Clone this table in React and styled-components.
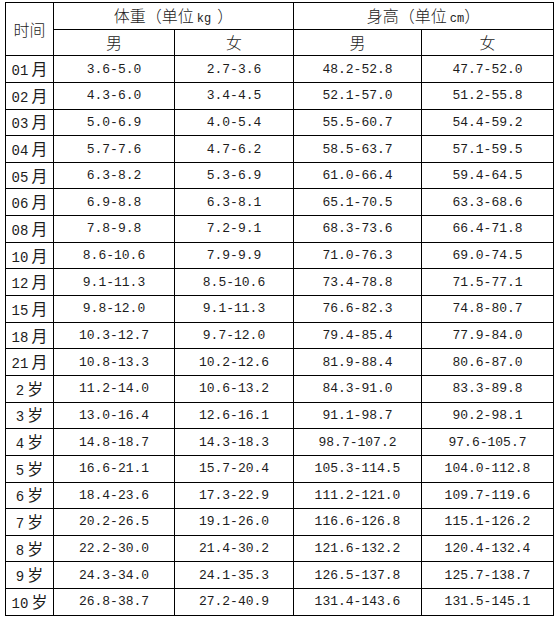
import React from 'react'
import styled, { createGlobalStyle } from 'styled-components'

const GlobalStyle = createGlobalStyle`
	html, body {
		margin: 0;
		padding: 0;
		background: #fff;
	}
	body {
		width: 559px;
		height: 619px;
		overflow: hidden;
	}
`

const Page = styled.div`
	padding: 2px 0 0 5px;
`

const Table = styled.table`
	border-collapse: collapse;
	table-layout: fixed;
	width: 548px;
	color: #1c1c1c;

	tr {
		height: 26.65px;
	}

	td, th {
		border: 1px solid #000;
		padding: 0;
		text-align: center;
		vertical-align: middle;
		font-weight: normal;
	}
`

const Head = styled.th`
	font-family: 'Noto Sans CJK SC', sans-serif;
	font-size: 16px;
	font-weight: 300 !important;
	line-height: 1;
`

const Unit = styled.span`
	font-family: 'Liberation Mono', monospace;
	font-size: 12px;
	margin: 0 ${(p) => p.$gap || 0}px 0 3px;
`

const Label = styled.td`
	font-family: 'Noto Sans CJK SC', sans-serif;
	font-size: 16px;
	font-weight: 300;
	line-height: 1;

	span {
		font-family: 'Liberation Mono', monospace;
		font-size: 14px;
		font-weight: normal;
		margin-right: 3px;
	}
`

const Value = styled.td`
	font-family: 'Liberation Mono', monospace;
	font-size: 13px;
	line-height: 1;
`

const rows = [
	['01', '月', '3.6-5.0', '2.7-3.6', '48.2-52.8', '47.7-52.0'],
	['02', '月', '4.3-6.0', '3.4-4.5', '52.1-57.0', '51.2-55.8'],
	['03', '月', '5.0-6.9', '4.0-5.4', '55.5-60.7', '54.4-59.2'],
	['04', '月', '5.7-7.6', '4.7-6.2', '58.5-63.7', '57.1-59.5'],
	['05', '月', '6.3-8.2', '5.3-6.9', '61.0-66.4', '59.4-64.5'],
	['06', '月', '6.9-8.8', '6.3-8.1', '65.1-70.5', '63.3-68.6'],
	['08', '月', '7.8-9.8', '7.2-9.1', '68.3-73.6', '66.4-71.8'],
	['10', '月', '8.6-10.6', '7.9-9.9', '71.0-76.3', '69.0-74.5'],
	['12', '月', '9.1-11.3', '8.5-10.6', '73.4-78.8', '71.5-77.1'],
	['15', '月', '9.8-12.0', '9.1-11.3', '76.6-82.3', '74.8-80.7'],
	['18', '月', '10.3-12.7', '9.7-12.0', '79.4-85.4', '77.9-84.0'],
	['21', '月', '10.8-13.3', '10.2-12.6', '81.9-88.4', '80.6-87.0'],
	['2', '岁', '11.2-14.0', '10.6-13.2', '84.3-91.0', '83.3-89.8'],
	['3', '岁', '13.0-16.4', '12.6-16.1', '91.1-98.7', '90.2-98.1'],
	['4', '岁', '14.8-18.7', '14.3-18.3', '98.7-107.2', '97.6-105.7'],
	['5', '岁', '16.6-21.1', '15.7-20.4', '105.3-114.5', '104.0-112.8'],
	['6', '岁', '18.4-23.6', '17.3-22.9', '111.2-121.0', '109.7-119.6'],
	['7', '岁', '20.2-26.5', '19.1-26.0', '116.6-126.8', '115.1-126.2'],
	['8', '岁', '22.2-30.0', '21.4-30.2', '121.6-132.2', '120.4-132.4'],
	['9', '岁', '24.3-34.0', '24.1-35.3', '126.5-137.8', '125.7-138.7'],
	['10', '岁', '26.8-38.7', '27.2-40.9', '131.4-143.6', '131.5-145.1'],
]

export default function App() {
	return (
		<>
			<GlobalStyle />
			<Page>
				<Table>
					<colgroup>
						<col style={{ width: 48 }} />
						<col style={{ width: 121 }} />
						<col style={{ width: 119 }} />
						<col style={{ width: 128 }} />
						<col style={{ width: 132 }} />
					</colgroup>
					<thead>
						<tr>
							<Head rowSpan={2}>时间</Head>
							<Head colSpan={2}>
								体重（单位<Unit $gap={6}>kg</Unit>）
							</Head>
							<Head colSpan={2}>
								身高（单位<Unit>cm</Unit>）
							</Head>
						</tr>
						<tr>
							<Head>男</Head>
							<Head>女</Head>
							<Head>男</Head>
							<Head>女</Head>
						</tr>
					</thead>
					<tbody>
						{rows.map(([n, u, a, b, c, d]) => (
							<tr key={n + u}>
								<Label>
									<span>{n}</span>
									{u}
								</Label>
								<Value>{a}</Value>
								<Value>{b}</Value>
								<Value>{c}</Value>
								<Value>{d}</Value>
							</tr>
						))}
					</tbody>
				</Table>
			</Page>
		</>
	)
}
